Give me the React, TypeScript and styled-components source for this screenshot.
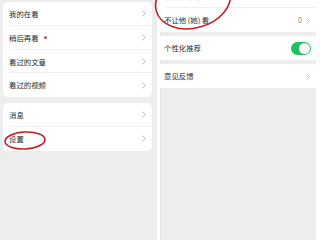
import styled, { createGlobalStyle } from 'styled-components';

const GlobalStyle = createGlobalStyle`
  html, body {
    margin: 0;
    padding: 0;
    background: #ffffff;
  }
  body {
    font-family: "Noto Sans CJK SC", "Noto Sans", sans-serif;
  }
`;

function Chevron() {
  return (
    <svg width="4" height="7" viewBox="0 0 4 7">
      <polyline points="0.5,0.5 3.5,3.5 0.5,6.5" fill="none" stroke="#b8b8b8" strokeWidth="0.9" />
    </svg>
  );
}

export default function App() {
  return (
    <Screen>
      <GlobalStyle />
      <LeftPanel>
        <Card>
          <Row>
            <Label>我的在看</Label>
            <Chevron />
          </Row>
          <Row>
            <Label>
              稍后再看<Dot />
            </Label>
            <Chevron />
          </Row>
          <Row>
            <Label>看过的文章</Label>
            <Chevron />
          </Row>
          <Row $last>
            <Label>看过的视频</Label>
            <Chevron />
          </Row>
        </Card>
        <Card>
          <Row>
            <Label>消息</Label>
            <Chevron />
          </Row>
          <Row $last>
            <Label>设置</Label>
            <Chevron />
          </Row>
        </Card>
      </LeftPanel>
      <Divider />
      <RightPanel>
        <Group>
          <SetRow $divider>
            <Label>不看他 (她)</Label>
            <Trail>
              <Count>0</Count>
              <Chevron />
            </Trail>
          </SetRow>
          <SetRow>
            <Label>不让他 (她) 看</Label>
            <Trail>
              <Count>0</Count>
              <Chevron />
            </Trail>
          </SetRow>
        </Group>
        <Group>
          <SetRow>
            <Label>个性化推荐</Label>
            <Toggle>
              <Knob />
            </Toggle>
          </SetRow>
        </Group>
        <Group>
          <SetRow>
            <Label>意见反馈</Label>
            <Chevron />
          </SetRow>
        </Group>
      </RightPanel>
      <Annotations width="320" height="240" viewBox="0 0 320 240">
        <ellipse cx="25" cy="140.5" rx="20" ry="8.5" transform="rotate(-3 25 140.5)" />
        <ellipse cx="193" cy="1" rx="38" ry="27" transform="rotate(-15 193 1)" />
      </Annotations>
    </Screen>
  );
}

const Screen = styled.div`
  position: relative;
  width: 320px;
  height: 240px;
  display: flex;
  overflow: hidden;
  background: #ffffff;
`;

const LeftPanel = styled.div`
  width: 157px;
  height: 240px;
  box-sizing: border-box;
  padding: 2px 5px 0 3px;
  background: #ededed;
  display: flex;
  flex-direction: column;
  gap: 6px;
`;

const Card = styled.div`
  background: #ffffff;
  border-radius: 5px;
  overflow: hidden;
`;

const Row = styled.div<{ $last?: boolean }>`
  position: relative;
  height: 23.75px;
  display: flex;
  align-items: center;
  justify-content: space-between;
  padding: 0 6px 0 6px;
  &::after {
    content: '';
    display: ${(p) => (p.$last ? 'none' : 'block')};
    position: absolute;
    left: 6px;
    right: 0;
    bottom: 0;
    height: 1px;
    background: #f2f2f2;
  }
`;

const Label = styled.span`
  display: flex;
  align-items: center;
  font-size: 7.4px;
  color: #2a2a2a;
  line-height: 1;
`;

const Dot = styled.span`
  width: 3px;
  height: 3px;
  margin-left: 5px;
  border-radius: 50%;
  background: #e4534e;
`;

const Divider = styled.div`
  width: 3px;
  background: #ffffff;
`;

const RightPanel = styled.div`
  width: 156px;
  height: 256px;
  margin-top: -16px;
  background: #ededed;
  display: flex;
  flex-direction: column;
  gap: 4px;
  box-shadow: inset 3px 0 2px -2px rgba(0, 0, 0, 0.04);
`;

const Group = styled.div`
  background: #ffffff;
`;

const SetRow = styled.div<{ $divider?: boolean }>`
  position: relative;
  height: 24px;
  display: flex;
  align-items: center;
  justify-content: space-between;
  padding: 0 6px 0 4px;
  &::after {
    content: '';
    display: ${(p) => (p.$divider ? 'block' : 'none')};
    position: absolute;
    left: 4px;
    right: 0;
    bottom: 0;
    height: 1px;
    background: #f0f0f0;
  }
`;

const Trail = styled.span`
  display: flex;
  align-items: center;
  gap: 4px;
`;

const Count = styled.span`
  font-size: 7.4px;
  color: #8a8a8a;
  line-height: 1;
`;

const Toggle = styled.span`
  width: 20px;
  height: 13px;
  border-radius: 7px;
  background: #1fc160;
  display: flex;
  align-items: center;
  justify-content: flex-end;
  padding: 0 1px;
  box-sizing: border-box;
  margin-right: -1px;
`;

const Knob = styled.span`
  width: 11px;
  height: 11px;
  border-radius: 50%;
  background: #ffffff;
`;

const Annotations = styled.svg`
  position: absolute;
  left: 0;
  top: 0;
  pointer-events: none;
  fill: none;
  stroke: #c4202a;
  stroke-width: 1.6;
`;
